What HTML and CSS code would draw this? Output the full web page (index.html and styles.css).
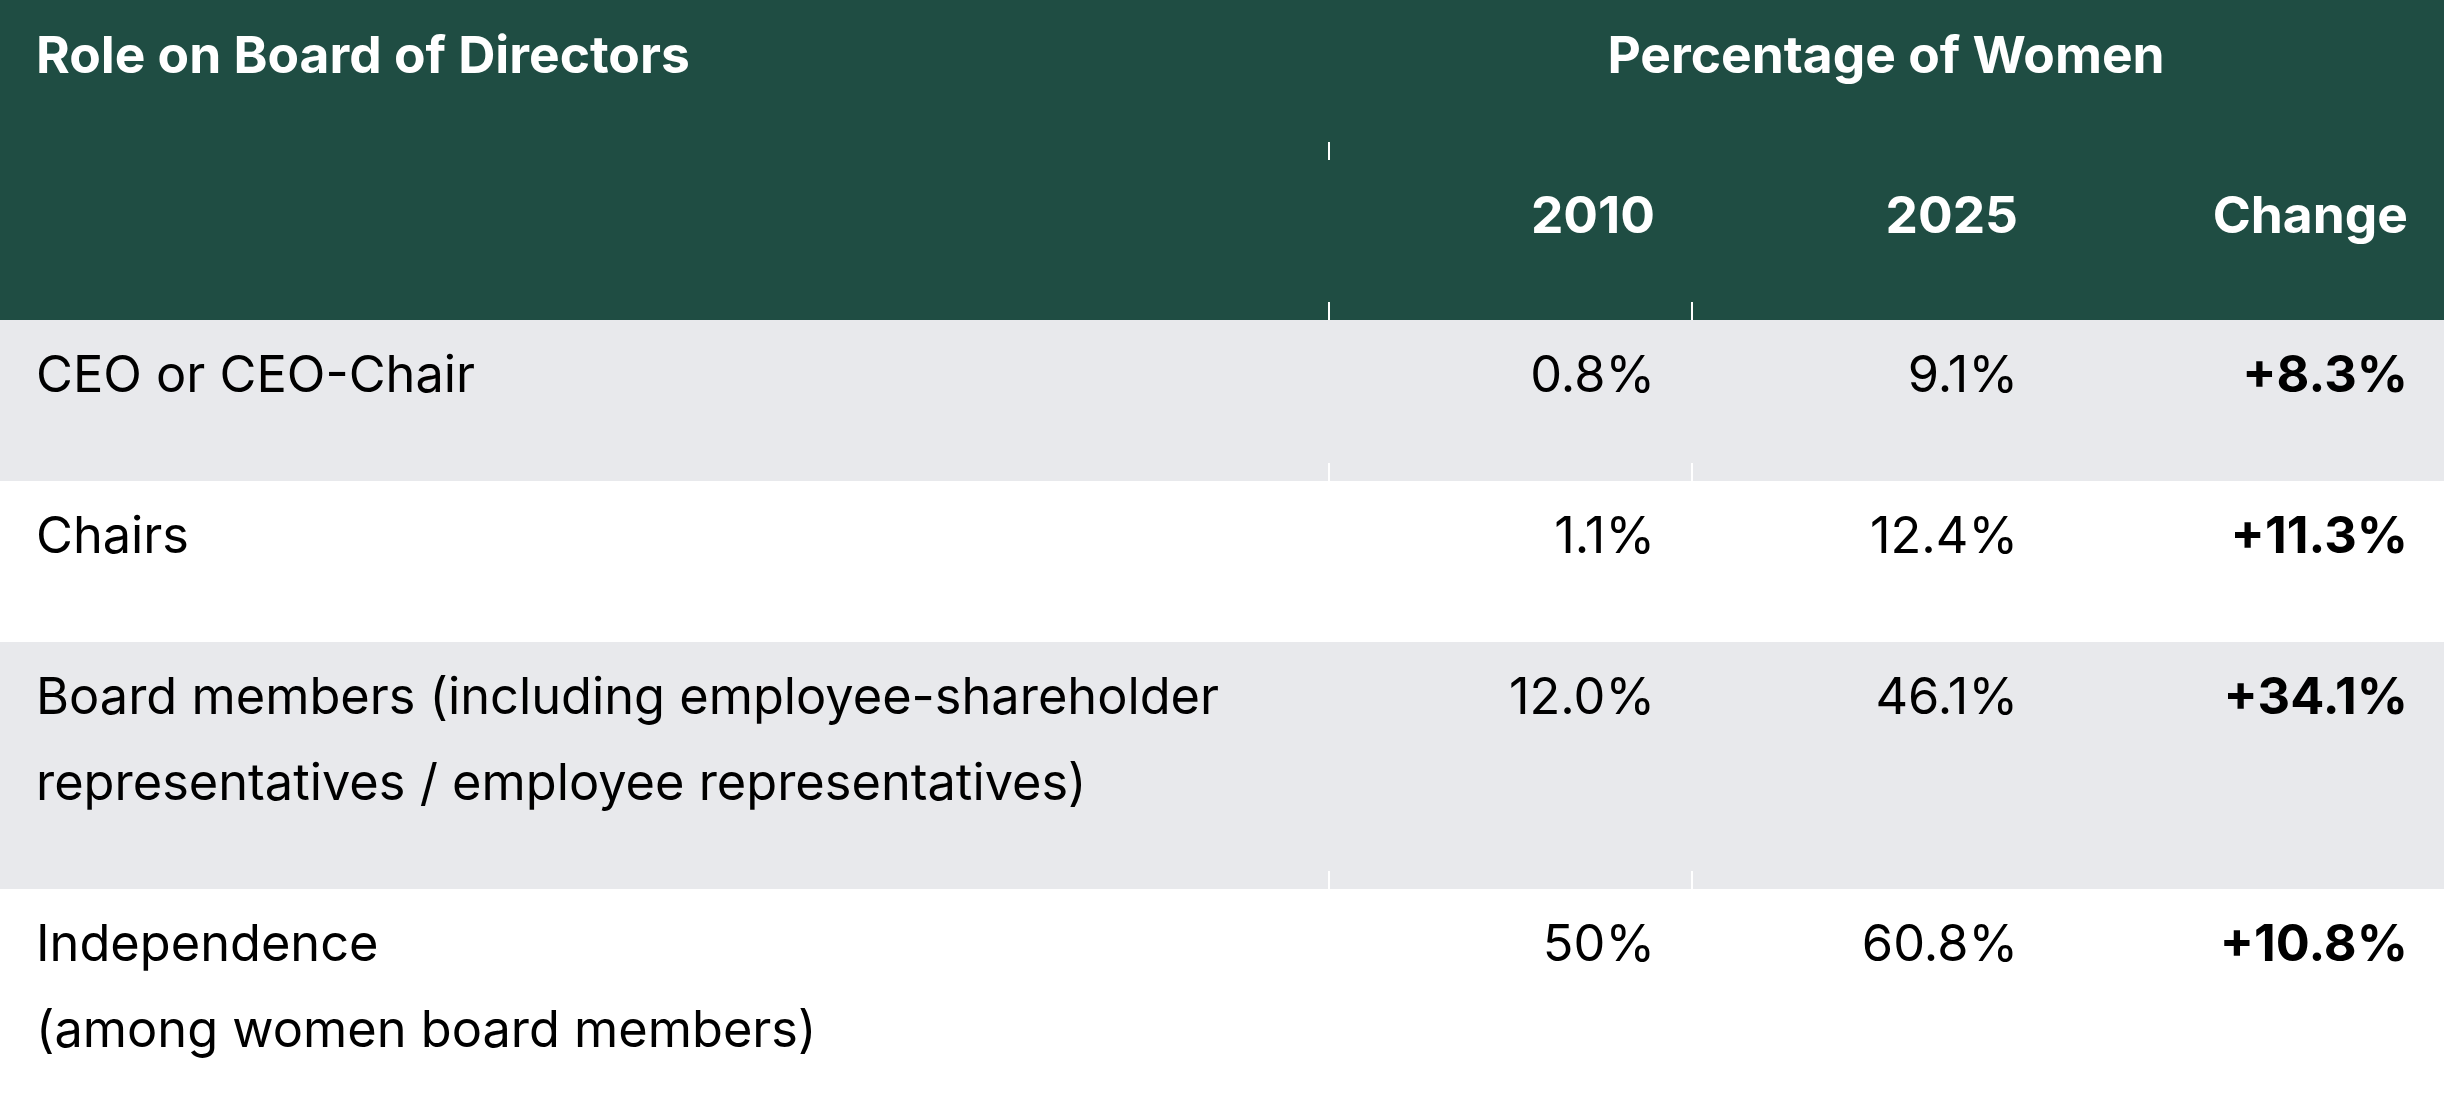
FILE: index.html
```html
<!DOCTYPE html>
<html lang="en">
<head>
<meta charset="utf-8">
<title>Women on Boards</title>
<link rel="stylesheet" href="styles.css">
</head>
<body>
<table class="board-table">
  <colgroup>
    <col class="col-role">
    <col class="col-num">
    <col class="col-num">
    <col class="col-change">
  </colgroup>
  <thead>
    <tr class="head-row">
      <th class="cell role" rowspan="2">Role on Board of Directors</th>
      <th class="cell group tick" colspan="3">Percentage of Women</th>
    </tr>
    <tr class="head-row">
      <th class="cell num tick">2010</th>
      <th class="cell num tick">2025</th>
      <th class="cell num">Change</th>
    </tr>
  </thead>
  <tbody>
    <tr class="row shaded">
      <td class="cell role">CEO or CEO-Chair</td>
      <td class="cell num tick">0.8%</td>
      <td class="cell num tick">9.1%</td>
      <td class="cell num change">+8.3%</td>
    </tr>
    <tr class="row">
      <td class="cell role">Chairs</td>
      <td class="cell num">1.1%</td>
      <td class="cell num">12.4%</td>
      <td class="cell num change">+11.3%</td>
    </tr>
    <tr class="row shaded">
      <td class="cell role">Board members (including employee-shareholder<br>representatives / employee representatives)</td>
      <td class="cell num tick">12.0%</td>
      <td class="cell num tick">46.1%</td>
      <td class="cell num change">+34.1%</td>
    </tr>
    <tr class="row">
      <td class="cell role">Independence<br>(among women board members)</td>
      <td class="cell num">50%</td>
      <td class="cell num">60.8%</td>
      <td class="cell num change">+10.8%</td>
    </tr>
  </tbody>
</table>
</body>
</html>
```
FILE: styles.css
```css
html, body {
  margin: 0;
  padding: 0;
  background: #ffffff;
}

body {
  font-family: Inter, "Noto Sans", sans-serif;
  color: #000000;
}

.board-table {
  width: 2444px;
  border-collapse: collapse;
  table-layout: fixed;
}

.col-role { width: 1328px; }
.col-num { width: 363px; }
.col-change { width: 390px; }

.cell {
  position: relative;
  padding: 11px 36px 64px 36px;
  font-size: 50.5px;
  line-height: 86px;
  vertical-align: top;
  text-align: left;
}

.head-row .cell {
  background: #1f4d43;
  color: #ffffff;
  font-weight: 700;
  font-size: 51.5px;
  padding-top: 11px;
  padding-bottom: 63px;
}

.head-row .group {
  text-align: center;
}

.cell.num {
  text-align: right;
}

.row.shaded .cell {
  background: #e8e9ec;
}

.cell.change {
  font-weight: 700;
}

.tick::before {
  content: "";
  position: absolute;
  left: 0;
  bottom: 0;
  width: 2px;
  height: 18px;
  background: #ffffff;
}
```
